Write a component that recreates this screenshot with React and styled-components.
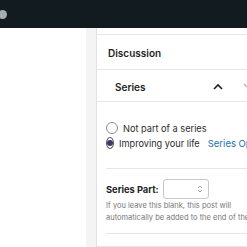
import React from "react";
import styled, { createGlobalStyle } from "styled-components";

const Global = createGlobalStyle`
  html, body { margin: 0; padding: 0; background: #fff; }
  body { font-family: Inter, "Noto Sans", sans-serif; color: #1e1e1e; overflow: hidden; }
`;

const Page = styled.div`
  width: 247px;
  height: 247px;
  display: flex;
  flex-direction: column;
  overflow: hidden;
`;

const TopBar = styled.div`
  height: 28px;
  background: #121b20;
  flex: none;
  display: flex;
  align-items: center;
`;

const Dot = styled.div`
  width: 9px;
  height: 9px;
  border-radius: 50%;
  background: #a9acae;
  margin-left: -2px;
`;

const Body = styled.div`
  flex: 1;
  display: flex;
`;

const Canvas = styled.div`
  width: 86px;
  flex: none;
  background: #fff;
`;

const Gutter = styled.div`
  width: 10px;
  flex: none;
  background: #f4f4f4;
  border-right: 1px solid #e2e2e2;
`;

const Sidebar = styled.div`
  flex: 1;
  display: flex;
  flex-direction: column;
  min-width: 0;
`;

const PrevEnd = styled.div`
  height: 6px;
  border-bottom: 1px solid #e6e6e6;
`;

const PanelHeader = styled.div`
  height: ${(p) => p.$h}px;
  box-sizing: border-box;
  border-bottom: 1px solid #e6e6e6;
  display: flex;
  align-items: center;
  padding-left: ${(p) => p.$pl}px;
  padding-top: ${(p) => p.$pt || 0}px;
  font-size: 10px;
  font-weight: 600;
  white-space: nowrap;
`;

const Title = styled.span`
  flex: 1;
`;

const IconWrap = styled.span`
  display: flex;
  align-items: center;
  margin-right: ${(p) => p.$mr}px;
`;

const Content = styled.div`
  padding: 20px 0 0 9px;
  white-space: nowrap;
`;

const RadioList = styled.div`
  display: flex;
  flex-direction: column;
  gap: 3px;
`;

const RadioRow = styled.label`
  display: flex;
  align-items: center;
  height: 12px;
  font-size: 9.2px;
  color: #2c2c2c;
`;

const RadioCircle = styled.span`
  width: 12px;
  height: 12px;
  border-radius: 50%;
  border: 1px solid ${(p) => (p.$on ? "#555" : "#8a8a8a")};
  box-sizing: border-box;
  margin-right: 5px;
  display: flex;
  align-items: center;
  justify-content: center;
  &::after {
    content: "";
    width: 6px;
    height: 6px;
    border-radius: 50%;
    background: ${(p) => (p.$on ? "#3d3570" : "transparent")};
  }
`;

const Link = styled.span`
  color: #2271b1;
  margin-left: 8px;
  font-size: 9.5px;
`;

const PartBox = styled.div`
  margin-top: 19px;
  border-top: 1px solid #e6e6e6;
  border-bottom: 1px solid #e6e6e6;
  padding: 10px 0 9px 0;
`;

const PartRow = styled.div`
  display: flex;
  align-items: center;
  gap: 4px;
`;

const PartLabel = styled.span`
  font-size: 9.3px;
  font-weight: 700;
  color: #222;
`;

const NumInput = styled.div`
  width: 46px;
  height: 20px;
  box-sizing: border-box;
  border: 1px solid #c8c8c8;
  border-radius: 3px;
  display: flex;
  align-items: center;
  justify-content: flex-end;
  padding-right: 5px;
`;

const Help = styled.p`
  margin: 1px 0 0 0;
  font-size: 7.5px;
  line-height: 12px;
  color: #777;
`;

const PanelEnd = styled.div`
  height: 12px;
  border-bottom: 1px solid #e6e6e6;
`;

export default function App() {
  return (
    <Page>
      <Global />
      <TopBar>
        <Dot />
      </TopBar>
      <Body>
        <Canvas />
        <Gutter />
        <Sidebar>
          <PrevEnd />
          <PanelHeader $h={35} $pl={11} $pt={2}>
            <Title>Discussion</Title>
          </PanelHeader>
          <PanelHeader $h={32} $pl={18} $pt={2}>
            <Title>Series</Title>
            <IconWrap $mr={20}>
              <svg width="10" height="7" viewBox="0 0 10 7">
                <path d="M1 6 L5 2 L9 6" fill="none" stroke="#1e1e1e" strokeWidth="1.6" />
              </svg>
            </IconWrap>
            <IconWrap $mr={-4}>
              <svg width="8" height="8" viewBox="0 0 8 8">
                <path d="M1 1 L4 4" fill="none" stroke="#aaa" strokeWidth="1.2" />
              </svg>
            </IconWrap>
          </PanelHeader>
          <Content>
            <RadioList>
              <RadioRow>
                <RadioCircle />
                Not part of a series
              </RadioRow>
              <RadioRow>
                <RadioCircle $on />
                Improving your life
                <Link>Series Options</Link>
              </RadioRow>
            </RadioList>
            <PartBox>
              <PartRow>
                <PartLabel>Series Part:</PartLabel>
                <NumInput>
                  <svg width="6" height="10" viewBox="0 0 6 10">
                    <path d="M1 4 L3 2 L5 4 M1 6 L3 8 L5 6" fill="none" stroke="#999" strokeWidth="0.9" />
                  </svg>
                </NumInput>
              </PartRow>
              <Help>
                If you leave this blank, this post will
                <br />
                automatically be added to the end of the series.
              </Help>
            </PartBox>
          </Content>
          <PanelEnd />
        </Sidebar>
      </Body>
    </Page>
  );
}
